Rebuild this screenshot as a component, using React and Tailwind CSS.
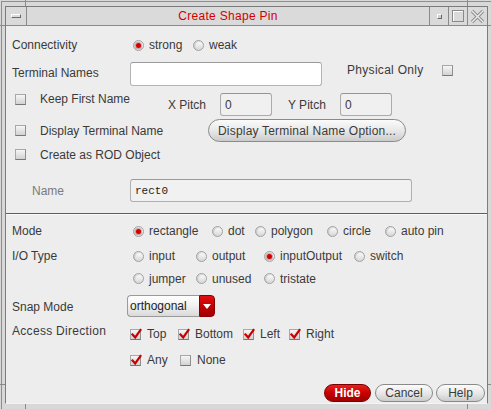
import React from "react";

function Radio({ on }) {
  return (
    <span className="w-[11px] h-[11px] shrink-0 rounded-full border border-[#a2a2a2] bg-[linear-gradient(180deg,#ffffff,#d6d6d6)] shadow-[inset_1px_1px_1px_rgba(0,0,0,0.15)] flex items-center justify-center">
      {on && <span className="w-[5px] h-[5px] rounded-full bg-[#d40000] shadow-[0_0_0_1px_rgba(150,0,0,0.3)]" />}
    </span>
  );
}

function RadioItem({ on, label, w }) {
  return (
    <span className={`flex items-center gap-[5px] shrink-0 ${w || ""}`}>
      <Radio on={on} />
      <span>{label}</span>
    </span>
  );
}

function Check({ on }) {
  return (
    <span className="relative w-[11px] h-[11px] shrink-0 border border-[#a8a8a8] border-b-[#767676] border-r-[#909090] bg-[linear-gradient(180deg,#f6f6f6,#d2d2d2)]">
      {on && (
        <svg className="absolute left-0 -top-[2px]" width="11" height="12" viewBox="0 0 11 12">
          <path d="M1.5 6.5 L4.2 9.5 L9.5 2" fill="none" stroke="#c80000" strokeWidth="2.2" strokeLinecap="square" />
        </svg>
      )}
    </span>
  );
}

function CheckItem({ on, label, w }) {
  return (
    <span className={`flex items-center gap-[6px] shrink-0 ${w || ""}`}>
      <Check on={on} />
      <span>{label}</span>
    </span>
  );
}

function PillButton({ children, className }) {
  return (
    <div
      className={`flex items-center justify-center rounded-full border border-[#8a8a8a] bg-[linear-gradient(180deg,#fbfbfb,#e6e6e6_55%,#cbcbcb)] text-[#3a3a3a] ${className || ""}`}
    >
      {children}
    </div>
  );
}

export default function App() {
  return (
    <div className="relative w-[491px] h-[409px] overflow-hidden bg-[#d8d8d8] font-['Liberation_Sans',Arial,sans-serif] text-[12px] leading-[14px] text-[#3a3a3a]">
      {/* outer frame line */}
      <div className="w-full h-full pt-[1px] pl-[1px]">
        <div className="w-full h-full border-t border-l border-[#8e8e8e] pt-[4px] pl-[3px] pr-[2px] pb-[4px]">
          {/* window */}
          <div className="w-[483px] h-[398px] border border-[#7c7c7c] border-b-[#f4f4f4] flex flex-col">
            {/* title bar */}
            <div className="h-[19px] shrink-0 flex border-b border-[#8a8a8a] bg-[#dadada]">
              <div className="w-[21px] border-r border-[#8a8a8a] flex items-center justify-center">
                <span className="w-[10px] h-[4px] border border-t-white border-l-white border-b-[#6a6a6a] border-r-[#6a6a6a]" />
              </div>
              <div className="flex-1 flex items-center justify-center text-[#d40000] text-[12px] tracking-[0.3px]">
                Create Shape Pin
              </div>
              <div className="w-[19px] border-l border-[#8a8a8a] flex items-center justify-center">
                <span className="w-[5px] h-[5px] border border-t-white border-l-white border-b-[#6a6a6a] border-r-[#6a6a6a] bg-[#cfcfcf]" />
              </div>
              <div className="w-[19px] border-l border-[#8a8a8a] flex items-center justify-center">
                <span className="w-[12px] h-[12px] border border-[#8a8a8a] shadow-[inset_1px_1px_0_#fff]" />
              </div>
              <div className="w-[20px] border-l border-[#8a8a8a] flex items-center justify-center">
                <svg width="15" height="15" viewBox="0 0 15 15">
                  <path d="M2 2 L13 13 M13 2 L2 13" stroke="#8c8c8c" strokeWidth="3.2" fill="none" />
                  <path d="M2 2 L13 13 M13 2 L2 13" stroke="#ececec" strokeWidth="1.4" fill="none" />
                </svg>
              </div>
            </div>

            {/* content */}
            <div className="flex-1 bg-[#ededed] pl-[6px] flex flex-col">
              {/* Connectivity */}
              <div className="mt-[8px] h-[22px] flex items-center">
                <span className="w-[118px]">Connectivity</span>
                <div className="pl-[3px] flex items-center">
                  <RadioItem on label="strong" w="w-[60px]" />
                  <RadioItem label="weak" />
                </div>
              </div>

              {/* Terminal Names */}
              <div className="mt-[6px] h-[24px] flex items-start">
                <span className="w-[118px] mt-[4px]">Terminal Names</span>
                <div className="w-[192px] h-[24px] rounded-[3px] border border-[#b4b4b4] border-t-[#9a9a9a] bg-white" />
                <span className="ml-[25px] w-[95px] mt-[1px] tracking-[0.3px]">Physical Only</span>
                <span className="mt-[3px] flex">
                  <Check />
                </span>
              </div>

              {/* Keep First Name / pitch */}
              <div className="mt-[7px] h-[23px] flex items-start">
                <div className="w-[156px] h-[12px] flex items-center">
                  <span className="ml-[3px] flex"><Check /></span>
                  <span className="ml-[14px]">Keep First Name</span>
                </div>
                <div className="h-[23px] flex items-center">
                  <span className="w-[52px]">X Pitch</span>
                  <div className="w-[52px] h-[23px] rounded-[3px] border border-[#ababab] border-t-[#959595] bg-[#f0f0f0] flex items-center pl-[4px]">0</div>
                  <span className="ml-[16px] w-[52px]">Y Pitch</span>
                  <div className="w-[52px] h-[23px] rounded-[3px] border border-[#ababab] border-t-[#959595] bg-[#f0f0f0] flex items-center pl-[4px]">0</div>
                </div>
              </div>

              {/* Display Terminal Name */}
              <div className="mt-[3px] h-[23px] flex items-center">
                <div className="w-[196px] flex items-center">
                  <span className="ml-[3px] flex"><Check /></span>
                  <span className="ml-[14px]">Display Terminal Name</span>
                </div>
                <PillButton className="w-[198px] h-[23px] tracking-[0.2px]">Display Terminal Name Option...</PillButton>
              </div>

              {/* ROD */}
              <div className="mt-[2px] h-[21px] flex items-center">
                <span className="ml-[3px] flex"><Check /></span>
                <span className="ml-[14px]">Create as ROD Object</span>
              </div>

              {/* Name */}
              <div className="mt-[14px] h-[23px] flex items-center">
                <span className="w-[118px] pl-[20px] text-[#7a7a7a]">Name</span>
                <div className="w-[282px] h-[23px] rounded-[3px] border border-[#b0b0b0] border-t-[#9a9a9a] bg-[#f1f1f1] flex items-center pl-[4px] font-['Liberation_Mono',monospace] text-[11px] text-[#222]">
                  rect0
                </div>
              </div>

              {/* separator */}
              <div className="mt-[11px] -ml-[6px] h-[2px] border-t border-[#5e5e5e] border-b border-b-[#fafafa]" />

              {/* Mode */}
              <div className="mt-[5px] h-[22px] flex items-center">
                <span className="w-[118px]">Mode</span>
                <div className="pl-[3px] flex items-center">
                  <RadioItem on label="rectangle" w="w-[79px]" />
                  <RadioItem label="dot" w="w-[43px]" />
                  <RadioItem label="polygon" w="w-[72px]" />
                  <RadioItem label="circle" w="w-[58px]" />
                  <RadioItem label="auto pin" />
                </div>
              </div>

              {/* I/O Type */}
              <div className="mt-[4px] h-[20px] flex items-center">
                <span className="w-[118px]">I/O Type</span>
                <div className="pl-[3px] flex items-center">
                  <RadioItem label="input" w="w-[63px]" />
                  <RadioItem label="output" w="w-[68px]" />
                  <RadioItem on label="inputOutput" w="w-[90px]" />
                  <RadioItem label="switch" />
                </div>
              </div>
              <div className="mt-[2px] h-[21px] flex items-center">
                <span className="w-[118px]" />
                <div className="pl-[3px] flex items-center">
                  <RadioItem label="jumper" w="w-[63px]" />
                  <RadioItem label="unused" w="w-[68px]" />
                  <RadioItem label="tristate" />
                </div>
              </div>

              {/* Snap Mode */}
              <div className="mt-[6px] h-[22px] flex items-center">
                <span className="w-[115px] mt-[2px]">Snap Mode</span>
                <div className="w-[88px] h-[22px] flex">
                  <div className="w-[72px] h-full rounded-l-[4px] border border-[#9a9a9a] border-r-0 bg-[linear-gradient(180deg,#ffffff,#f0f0f0_50%,#d9d9d9)] flex items-center pl-[2px] text-[#222]">
                    orthogonal
                  </div>
                  <div className="w-[16px] h-full rounded-r-[4px] border border-[#8a0000] bg-[linear-gradient(180deg,#e01010,#c00000_55%,#a00000)] flex items-center justify-center">
                    <svg width="8" height="5" viewBox="0 0 8 5">
                      <path d="M0 0 L8 0 L4 5 Z" fill="#ffffff" />
                    </svg>
                  </div>
                </div>
              </div>

              {/* Access Direction */}
              <div className="mt-[7px] h-[20px] flex items-start">
                <span className="w-[118px] tracking-[0.3px]">Access Direction</span>
                <div className="h-[20px] flex items-center">
                  <CheckItem on label="Top" w="w-[48px]" />
                  <CheckItem on label="Bottom" w="w-[65px]" />
                  <CheckItem on label="Left" w="w-[46px]" />
                  <CheckItem on label="Right" />
                </div>
              </div>
              <div className="mt-[6px] h-[20px] flex items-center">
                <span className="w-[118px]" />
                <CheckItem on label="Any" w="w-[50px]" />
                <CheckItem label="None" />
              </div>

              {/* buttons */}
              <div className="mt-[14px] h-[18px] flex justify-end pr-[2px]">
                <div className="w-[47px] h-[18px] rounded-full border border-[#7a0000] bg-[linear-gradient(180deg,#e82020,#c80000_50%,#a00000)] text-white font-bold flex items-center justify-center">
                  Hide
                </div>
                <PillButton className="ml-[4px] w-[58px] h-[18px]">Cancel</PillButton>
                <PillButton className="ml-[3px] w-[49px] h-[18px]">Help</PillButton>
              </div>
            </div>
          </div>
        </div>
      </div>

      {/* frame corner ticks */}
      <span className="absolute left-[25px] top-0 w-[1px] h-[6px] bg-[#8a8a8a]" />
      <span className="absolute left-[467px] top-0 w-[1px] h-[6px] bg-[#8a8a8a]" />
      <span className="absolute left-0 top-[25px] w-[5px] h-[1px] bg-[#8a8a8a]" />
      <span className="absolute left-0 top-[384px] w-[5px] h-[1px] bg-[#8a8a8a]" />
      <span className="absolute left-[488px] top-[25px] w-[3px] h-[1px] bg-[#8a8a8a]" />
      <span className="absolute left-[488px] top-[384px] w-[3px] h-[1px] bg-[#8a8a8a]" />
      <span className="absolute left-[25px] top-[404px] w-[1px] h-[5px] bg-[#8a8a8a]" />
      <span className="absolute left-[467px] top-[404px] w-[1px] h-[5px] bg-[#8a8a8a]" />
    </div>
  );
}
